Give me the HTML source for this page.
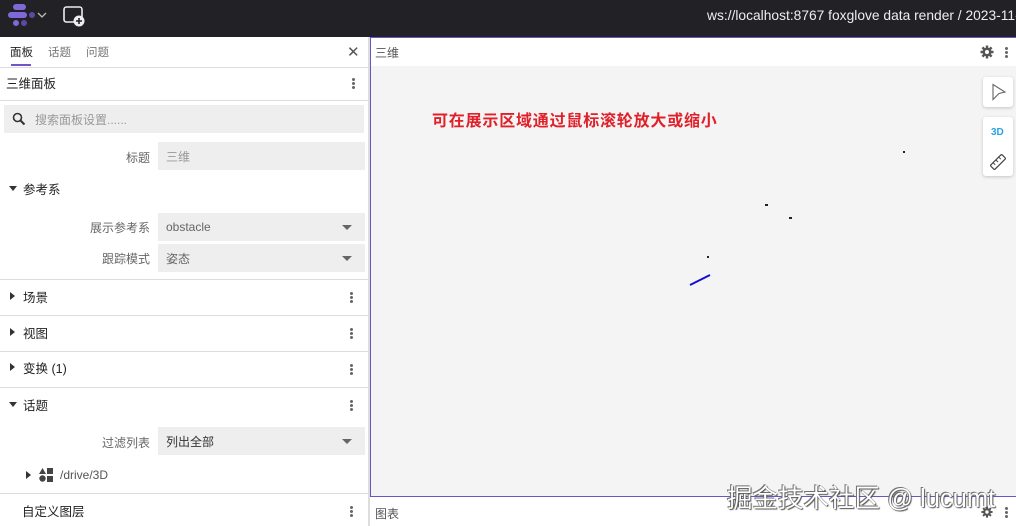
<!DOCTYPE html>
<html><head><meta charset="utf-8"><style>
*{box-sizing:border-box;margin:0;padding:0}
body{width:1016px;height:526px;overflow:hidden;background:#fff;font-family:"Liberation Sans","Noto Sans CJK SC",sans-serif;font-size:12px;color:#333;position:relative}
.abs{position:absolute}
.top{left:0;top:0;width:1016px;height:37px;background:#212126}
.sep{position:absolute;left:0;width:368px;height:1px;background:#ddd}
.row{position:absolute;left:0;width:368px;height:30px;display:flex;align-items:center;font-size:12.5px;color:#222}
.dots{position:absolute;right:14px;width:3px}
.dots i{display:block;width:3px;height:3px;border-radius:50%;background:#666;margin:1px 0}
.tri-r{display:inline-block;width:0;height:0;border-top:4px solid transparent;border-bottom:4px solid transparent;border-left:5px solid #333;margin:0 8px 0 10px}
.tri-d{display:inline-block;width:0;height:0;border-left:4px solid transparent;border-right:4px solid transparent;border-top:5px solid #333;margin:0 6px 0 9px}
.lbl{position:absolute;width:150px;text-align:right;color:#666;font-size:12px}
.inp{position:absolute;left:158px;width:207px;height:28px;background:#eee;color:#666;font-size:12px;display:flex;align-items:center;padding-left:8px}
.inp .dd{position:absolute;right:13px;top:12px;border-left:5px solid transparent;border-right:5px solid transparent;border-top:5px solid #666}
</style></head><body>
<div class="abs top"></div>
<svg class="abs" style="left:7px;top:3px" width="30" height="24" viewBox="0 0 30 24">
<g fill="#7e69d6"><circle cx="9" cy="4" r="3"/><circle cx="16" cy="4" r="3"/><rect x="9" y="1" width="7" height="6"/>
<circle cx="4" cy="12" r="3"/><circle cx="11" cy="12" r="3"/><circle cx="17" cy="12" r="3"/><rect x="4" y="9" width="13" height="6"/>
<circle cx="25" cy="12" r="3" fill="#5d4aa0"/><circle cx="9" cy="20" r="3"/><circle cx="17" cy="20" r="3" fill="#5d4aa0"/></g></svg>
<svg class="abs" style="left:37px;top:11px" width="10" height="8"><path d="M1 2l4 4 4-4" stroke="#bbb" stroke-width="1.3" fill="none"/></svg>
<svg class="abs" style="left:63px;top:6px" width="24" height="22"><rect x="1" y="1" width="18" height="15" rx="2.5" stroke="#eee" stroke-width="1.6" fill="none"/><circle cx="16" cy="15" r="5.5" fill="#eee"/><path d="M16 12v6M13 15h6" stroke="#212126" stroke-width="1.6"/></svg>
<div class="abs" style="left:707px;top:8px;color:#eee;font-size:13.8px;white-space:nowrap">ws://localhost:8767 foxglove data render / 2023-11-2</div>

<div class="abs" style="left:368px;top:37px;width:2px;height:489px;background:#ddd"></div>
<div class="abs" style="left:10px;top:44px;font-size:11.5px;color:#222">面板</div>
<div class="abs" style="left:48px;top:44px;font-size:11.5px;color:#777">话题</div>
<div class="abs" style="left:86px;top:44px;font-size:11.5px;color:#777">问题</div>
<div class="abs" style="left:11px;top:64px;width:20px;height:2px;background:#6f55c9"></div>
<div class="abs" style="left:347px;top:43px;font-size:15px;color:#555">✕</div>
<div class="sep" style="top:67px"></div>
<div class="row" style="top:67px;padding-left:6px">三维面板</div>
<div class="dots" style="top:77px;left:352px"><i></i><i></i><i></i></div>
<div class="sep" style="top:100px"></div>
<div class="abs" style="left:4px;top:105px;width:360px;height:28px;background:#eee"></div>
<svg class="abs" style="left:12px;top:112px" width="14" height="14"><circle cx="5.5" cy="5.5" r="4" stroke="#333" stroke-width="1.6" fill="none"/><path d="M8.5 8.5l4 4" stroke="#333" stroke-width="2"/></svg>
<div class="abs" style="left:35px;top:111px;color:#999;font-size:12px">搜索面板设置......</div>
<div class="lbl" style="left:0;top:149px">标题</div>
<div class="inp" style="top:142px;color:#999">三维</div>
<div class="row" style="top:173px"><span class="tri-d"></span>参考系</div>
<div class="lbl" style="left:0;top:219px">展示参考系</div>
<div class="inp" style="top:213px">obstacle<span class="dd"></span></div>
<div class="lbl" style="left:0;top:250px">跟踪模式</div>
<div class="inp" style="top:244px">姿态<span class="dd"></span></div>
<div class="sep" style="top:279px"></div>
<div class="row" style="top:281px"><span class="tri-r"></span>场景</div>
<div class="dots" style="top:291px;left:350px"><i></i><i></i><i></i></div>
<div class="sep" style="top:315px"></div>
<div class="row" style="top:317px"><span class="tri-r"></span>视图</div>
<div class="dots" style="top:327px;left:350px"><i></i><i></i><i></i></div>
<div class="sep" style="top:351px"></div>
<div class="row" style="top:352px"><span class="tri-r"></span>变换 (1)</div>
<div class="dots" style="top:363px;left:350px"><i></i><i></i><i></i></div>
<div class="sep" style="top:387px"></div>
<div class="row" style="top:389px"><span class="tri-d"></span>话题</div>
<div class="dots" style="top:399px;left:350px"><i></i><i></i><i></i></div>
<div class="lbl" style="left:0;top:434px">过滤列表</div>
<div class="inp" style="top:427px;color:#333">列出全部<span class="dd"></span></div>
<span class="abs" style="left:26px;top:471px;border-top:4px solid transparent;border-bottom:4px solid transparent;border-left:5px solid #333"></span>
<svg class="abs" style="left:39px;top:468px" width="14" height="14"><path d="M3.5 0L7 6H0z" fill="#444"/><rect x="8" y="0" width="6" height="6" fill="#444"/><circle cx="3.5" cy="10.5" r="3.2" fill="#444"/><path d="M8 8h6v6h-6z" fill="#444"/></svg>
<div class="abs" style="left:60px;top:468px;color:#555;font-size:12px">/drive/3D</div>
<div class="sep" style="top:493px"></div>
<div class="row" style="top:495px;padding-left:22px">自定义图层</div>
<div class="dots" style="top:505px;left:350px"><i></i><i></i><i></i></div>

<div class="abs" style="left:370px;top:37px;width:646px;height:460px;border:1px solid #6a55c8;border-right:none;background:#f4f4f4"></div>
<div class="abs" style="left:371px;top:38px;width:645px;height:28px;background:#fff"></div>
<div class="abs" style="left:375px;top:44px;color:#555;font-size:12px">三维</div>
<svg class="abs" style="left:980px;top:45px" width="14" height="14" viewBox="0 0 14 14"><circle cx="7" cy="7" r="4.5" fill="#555"/><g stroke="#555" stroke-width="2.4"><path d="M7 0.5v13M0.5 7h13M2.4 2.4l9.2 9.2M11.6 2.4l-9.2 9.2"/></g><circle cx="7" cy="7" r="2" fill="#fff"/></svg>
<div class="dots" style="top:46px;left:1005px"><i></i><i></i><i></i></div>
<div class="abs" style="left:432px;top:107px;color:#e0212a;font-weight:bold;font-size:16px;letter-spacing:0.8px">可在展示区域通过鼠标滚轮放大或缩小</div>
<div class="abs" style="left:983px;top:77px;width:30px;height:30px;background:#fff;border-radius:3px;box-shadow:0 1px 3px rgba(0,0,0,.2)"></div>
<svg class="abs" style="left:990px;top:83px" width="18" height="18"><path d="M3 1.5l12 7.5-6 1.5-6 6z" stroke="#666" stroke-width="1.1" fill="none"/></svg>
<div class="abs" style="left:983px;top:117px;width:30px;height:59px;background:#fff;border-radius:3px;box-shadow:0 1px 3px rgba(0,0,0,.2)"></div>
<div class="abs" style="left:991px;top:127px;color:#2aa3e6;font-weight:bold;font-size:10px">3D</div>
<svg class="abs" style="left:989px;top:153px" width="18" height="18"><g transform="rotate(-45 9 9)"><rect x="1" y="6" width="16" height="6" rx="1" stroke="#444" stroke-width="1.2" fill="none"/><path d="M5 6v3M9 6v3M13 6v3" stroke="#444" stroke-width="1"/></g></svg>
<div class="abs" style="left:903px;top:151px;width:2px;height:2px;background:#222"></div>
<div class="abs" style="left:765px;top:204px;width:3px;height:2px;background:#222"></div>
<div class="abs" style="left:789px;top:217px;width:3px;height:2px;background:#222"></div>
<div class="abs" style="left:707px;top:256px;width:2px;height:2px;background:#222"></div>
<svg class="abs" style="left:688px;top:273px" width="26" height="14"><path d="M2 12L22 2" stroke="#1010d0" stroke-width="2"/></svg>

<div class="abs" style="left:375px;top:505px;color:#555;font-size:12px">图表</div>
<svg class="abs" style="left:981px;top:506px" width="12" height="12" viewBox="0 0 14 14"><circle cx="7" cy="7" r="4.5" fill="#555"/><g stroke="#555" stroke-width="2.4"><path d="M7 0.5v13M0.5 7h13M2.4 2.4l9.2 9.2M11.6 2.4l-9.2 9.2"/></g><circle cx="7" cy="7" r="2" fill="#fff"/></svg>
<div class="dots" style="top:506px;left:1005px"><i></i><i></i><i></i></div>
<div class="abs" style="left:727px;top:478px;font-size:25.5px;color:#fff;white-space:nowrap;text-shadow:0 0 1px #444,1px 1px 1px #555,-1px -1px 0 #777">掘金技术社区 @ lucumt</div>
</body></html>
